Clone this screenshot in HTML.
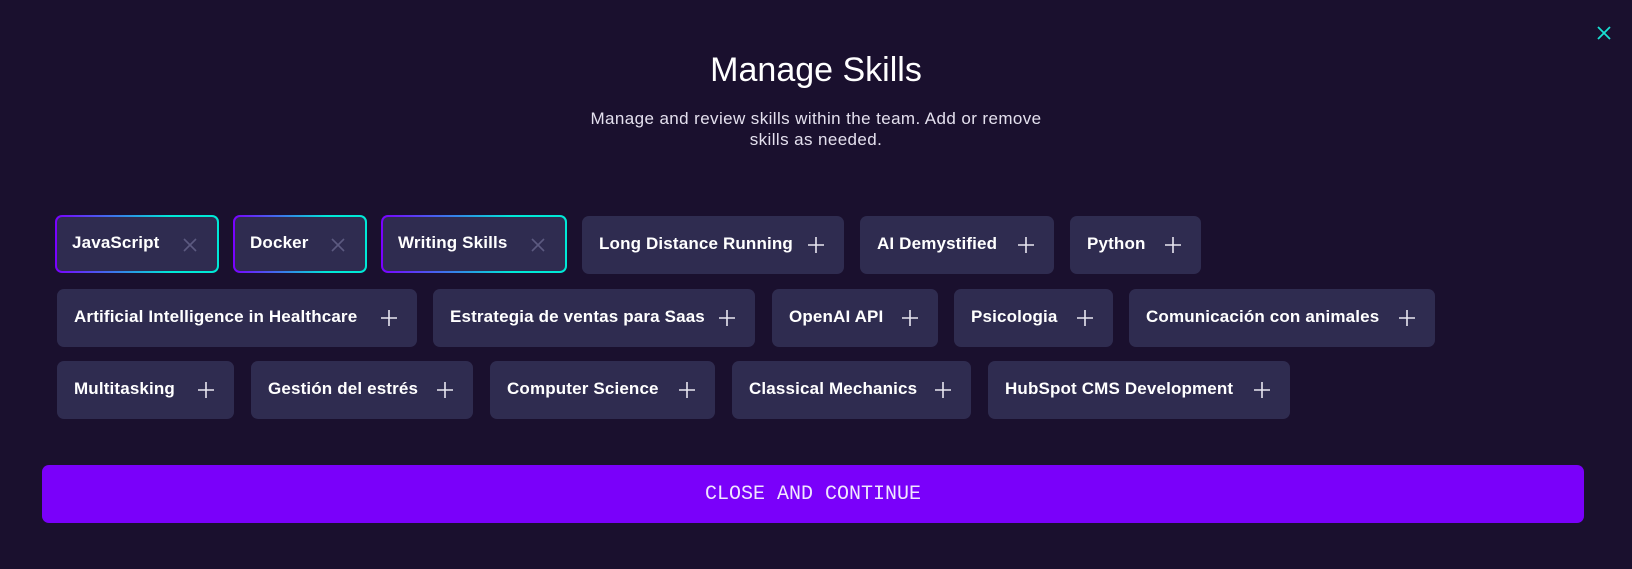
<!DOCTYPE html>
<html><head><meta charset="utf-8"><style>
html,body{margin:0;padding:0;}
body{width:1632px;height:569px;background:#1a102e;position:relative;overflow:hidden;font-family:"Liberation Sans",sans-serif;}
.t{position:absolute;left:0;width:1632px;text-align:center;color:#fff;}
.c{position:absolute;height:58px;background:#2f2c50;border-radius:7px;box-sizing:border-box;color:#fff;font-weight:bold;font-size:17px;}
.c span{position:absolute;left:17px;top:18px;white-space:nowrap;letter-spacing:0.15px;}
.c svg{position:absolute;right:20px;top:21px;}
.s{background:linear-gradient(#2f2c50,#2f2c50) padding-box,linear-gradient(90deg,#7a00ff,#00e8d6 70%) border-box;border:2px solid transparent;}
.s span{left:15px;top:16px;}
.s svg{right:20px;top:21px;}
</style></head><body>
<svg style="position:absolute;left:1597px;top:26px" width="14" height="14" viewBox="0 0 14 14"><path d="M1 1L13 13M13 1L1 13" stroke="#19e0d2" stroke-width="1.8"/></svg>
<div class="t" style="top:51px;font-size:34px;">Manage Skills</div>
<div class="t" style="top:108px;font-size:17px;line-height:21px;color:#e4e0ee;letter-spacing:0.4px;">Manage and review skills within the team. Add or remove<br>skills as needed.</div>

<div class="c s" style="left:55px;top:215px;width:164px"><span>JavaScript</span><svg width="14" height="14"><path d="M1 1L13 13M13 1L1 13" stroke="#5c5a80" stroke-width="1.6"/></svg></div>
<div class="c s" style="left:233px;top:215px;width:134px"><span>Docker</span><svg width="14" height="14"><path d="M1 1L13 13M13 1L1 13" stroke="#5c5a80" stroke-width="1.6"/></svg></div>
<div class="c s" style="left:381px;top:215px;width:186px"><span>Writing Skills</span><svg width="14" height="14"><path d="M1 1L13 13M13 1L1 13" stroke="#5c5a80" stroke-width="1.6"/></svg></div>
<div class="c" style="left:582px;top:216px;width:262px"><span>Long Distance Running</span><svg width="16" height="16"><path d="M8 0V16M0 8H16" stroke="#e8e6f0" stroke-width="1.6"/></svg></div>
<div class="c" style="left:860px;top:216px;width:194px"><span>AI Demystified</span><svg width="16" height="16"><path d="M8 0V16M0 8H16" stroke="#e8e6f0" stroke-width="1.6"/></svg></div>
<div class="c" style="left:1070px;top:216px;width:131px"><span>Python</span><svg width="16" height="16"><path d="M8 0V16M0 8H16" stroke="#e8e6f0" stroke-width="1.6"/></svg></div>

<div class="c" style="left:57px;top:289px;width:360px"><span>Artificial Intelligence in Healthcare</span><svg width="16" height="16"><path d="M8 0V16M0 8H16" stroke="#e8e6f0" stroke-width="1.6"/></svg></div>
<div class="c" style="left:433px;top:289px;width:322px"><span>Estrategia de ventas para Saas</span><svg width="16" height="16"><path d="M8 0V16M0 8H16" stroke="#e8e6f0" stroke-width="1.6"/></svg></div>
<div class="c" style="left:772px;top:289px;width:166px"><span>OpenAI API</span><svg width="16" height="16"><path d="M8 0V16M0 8H16" stroke="#e8e6f0" stroke-width="1.6"/></svg></div>
<div class="c" style="left:954px;top:289px;width:159px"><span>Psicologia</span><svg width="16" height="16"><path d="M8 0V16M0 8H16" stroke="#e8e6f0" stroke-width="1.6"/></svg></div>
<div class="c" style="left:1129px;top:289px;width:306px"><span>Comunicación con animales</span><svg width="16" height="16"><path d="M8 0V16M0 8H16" stroke="#e8e6f0" stroke-width="1.6"/></svg></div>

<div class="c" style="left:57px;top:361px;width:177px"><span>Multitasking</span><svg width="16" height="16"><path d="M8 0V16M0 8H16" stroke="#e8e6f0" stroke-width="1.6"/></svg></div>
<div class="c" style="left:251px;top:361px;width:222px"><span>Gestión del estrés</span><svg width="16" height="16"><path d="M8 0V16M0 8H16" stroke="#e8e6f0" stroke-width="1.6"/></svg></div>
<div class="c" style="left:490px;top:361px;width:225px"><span>Computer Science</span><svg width="16" height="16"><path d="M8 0V16M0 8H16" stroke="#e8e6f0" stroke-width="1.6"/></svg></div>
<div class="c" style="left:732px;top:361px;width:239px"><span>Classical Mechanics</span><svg width="16" height="16"><path d="M8 0V16M0 8H16" stroke="#e8e6f0" stroke-width="1.6"/></svg></div>
<div class="c" style="left:988px;top:361px;width:302px"><span>HubSpot CMS Development</span><svg width="16" height="16"><path d="M8 0V16M0 8H16" stroke="#e8e6f0" stroke-width="1.6"/></svg></div>

<div style="position:absolute;left:42px;top:465px;width:1542px;height:58px;background:#7a00fa;border-radius:7px;color:#f0e6ff;font-family:'Liberation Mono',monospace;font-size:20px;line-height:60px;text-align:center;">CLOSE AND CONTINUE</div>
</body></html>
